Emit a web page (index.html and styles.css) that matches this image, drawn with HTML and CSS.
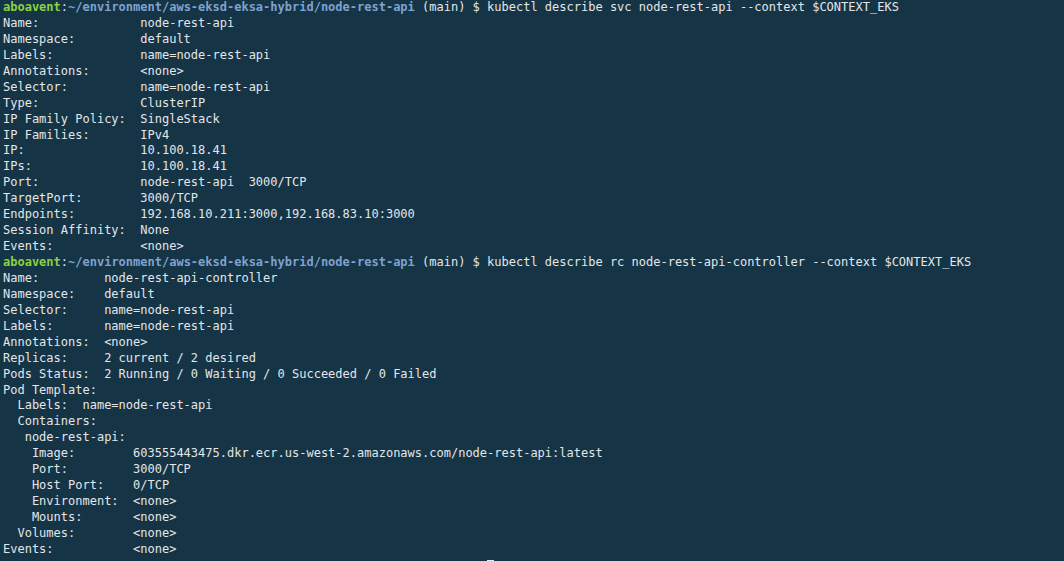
FILE: index.html
```html
<!DOCTYPE html>
<html>
<head>
<meta charset="utf-8">
<link rel="stylesheet" href="styles.css">
</head>
<body>
<pre class="term"><span class="user">aboavent</span><span class="colon">:</span><span class="path">~/environment/aws-eksd-eksa-hybrid/node-rest-api</span> (main) $ kubectl describe svc node-rest-api --context $CONTEXT_EKS
Name:              node-rest-api
Namespace:         default
Labels:            name=node-rest-api
Annotations:       &lt;none&gt;
Selector:          name=node-rest-api
Type:              ClusterIP
IP Family Policy:  SingleStack
IP Families:       IPv4
IP:                10.100.18.41
IPs:               10.100.18.41
Port:              node-rest-api  3000/TCP
TargetPort:        3000/TCP
Endpoints:         192.168.10.211:3000,192.168.83.10:3000
Session Affinity:  None
Events:            &lt;none&gt;
<span class="user">aboavent</span><span class="colon">:</span><span class="path">~/environment/aws-eksd-eksa-hybrid/node-rest-api</span> (main) $ kubectl describe rc node-rest-api-controller --context $CONTEXT_EKS
Name:         node-rest-api-controller
Namespace:    default
Selector:     name=node-rest-api
Labels:       name=node-rest-api
Annotations:  &lt;none&gt;
Replicas:     2 current / 2 desired
Pods Status:  2 Running / 0 Waiting / 0 Succeeded / 0 Failed
Pod Template:
  Labels:  name=node-rest-api
  Containers:
   node-rest-api:
    Image:        603555443475.dkr.ecr.us-west-2.amazonaws.com/node-rest-api:latest
    Port:         3000/TCP
    Host Port:    0/TCP
    Environment:  &lt;none&gt;
    Mounts:       &lt;none&gt;
  Volumes:        &lt;none&gt;
Events:           &lt;none&gt;
                                                                   <span class="cursor"> </span></pre>
</body>
</html>
```
FILE: styles.css
```css
html, body {
  margin: 0;
  padding: 0;
  background: #153446;
  height: 100%;
  overflow: hidden;
}
.term {
  margin: 0;
  padding: 0 0 0 3px;
  font-family: "DejaVu Sans Mono", monospace;
  font-size: 12px;
  line-height: 15.94px;
  color: #e4e6e8;
  white-space: pre;
}
.user {
  color: #8bd142;
  font-weight: bold;
}
.colon {
  color: #e4e6e8;
}
.path {
  color: #7fa2cf;
  font-weight: bold;
}
.cursor {
  display: inline-block;
  background: #e8e8e8;
  width: 7px;
  height: 15px;
  vertical-align: top;
  margin-top: 2px;
}
```
